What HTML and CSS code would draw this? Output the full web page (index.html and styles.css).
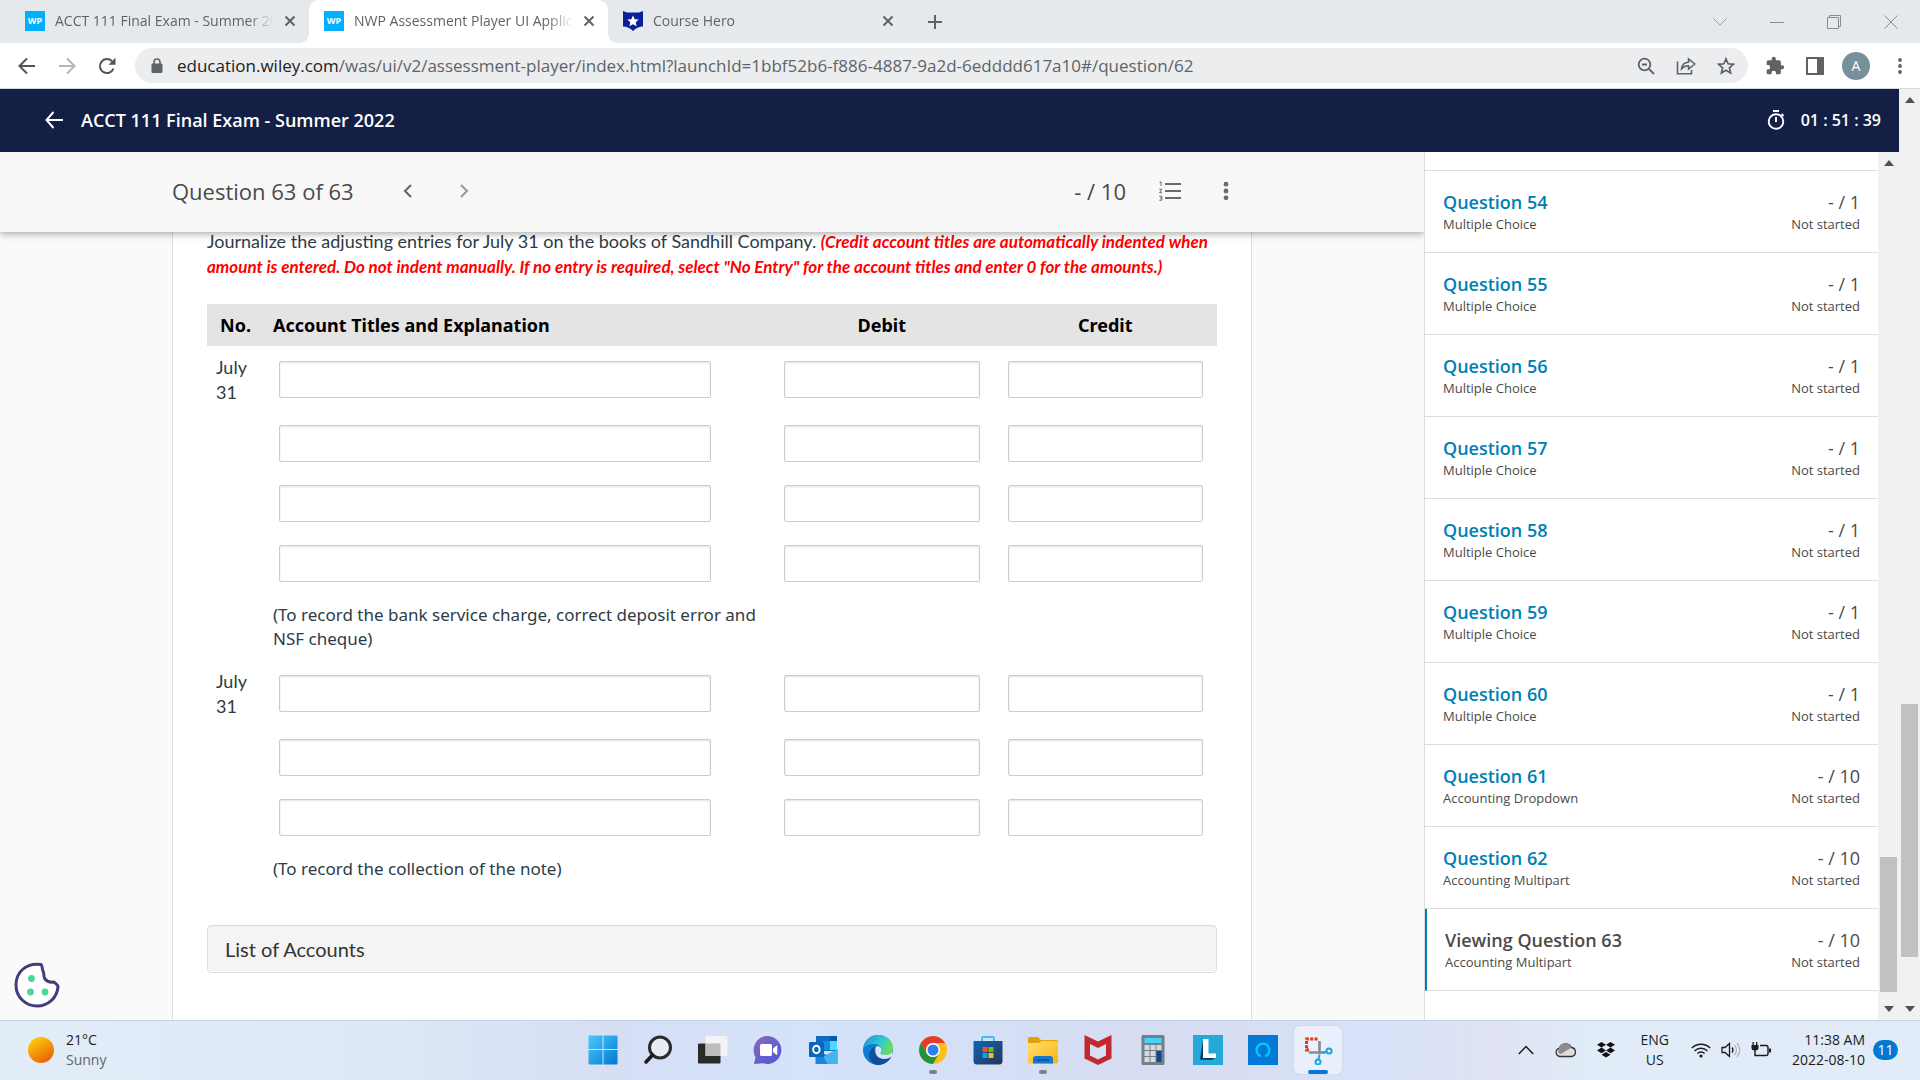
FILE: index.html
```
<!DOCTYPE html>
<html lang="en">
<head>
<meta charset="utf-8">
<title>NWP Assessment Player UI Application</title>
<link rel="stylesheet" href="styles.css">
</head>
<body>
<header class="browser">
  <div class="tabstrip">
    <div class="tab">
      <span class="favicon-wp">WP</span>
      <span class="tab-title">ACCT 111 Final Exam - Summer 2022</span>
      <button class="tab-close" aria-label="Close tab"><svg width="12" height="12" viewBox="0 0 12 12"><path d="M1.500 1.500l9 9M10.500 1.500l-9 9" stroke="#5f6368" stroke-width="2"/></svg></button>
    </div>
    <div class="tab tab-active">
      <span class="favicon-wp">WP</span>
      <span class="tab-title">NWP Assessment Player UI Application</span>
      <button class="tab-close" aria-label="Close tab"><svg width="12" height="12" viewBox="0 0 12 12"><path d="M1.500 1.500l9 9M10.500 1.500l-9 9" stroke="#5f6368" stroke-width="2"/></svg></button>
    </div>
    <div class="tab">
      <svg width="20" height="20" viewBox="0 0 20 20"><path d="M0 0l4 1.500h12L20 0v15.500c-4 0-7 1.500-10 4.500-3-3-6-4.500-10-4.500z" fill="#0a1f9c"/><path d="M10 4.500l1.700 3.700 4 .4-3 2.700.9 4-3.600-2.100-3.600 2.100.9-4-3-2.700 4-.4z" fill="#fff"/></svg>
      <span class="tab-title">Course Hero</span>
      <button class="tab-close" aria-label="Close tab"><svg width="12" height="12" viewBox="0 0 12 12"><path d="M1.500 1.500l9 9M10.500 1.500l-9 9" stroke="#5f6368" stroke-width="2"/></svg></button>
    </div>
    <button class="new-tab" aria-label="New tab"><svg width="16" height="16" viewBox="0 0 16 16"><path d="M8 1v14M1 8h14" stroke="#5f6368" stroke-width="2"/></svg></button>
    <div class="window-controls">
      <button aria-label="Search tabs"><svg width="14" height="8" viewBox="0 0 14 8"><path d="M.5.5L7 7.200 13.500.5" fill="none" stroke="#9a9da0"/></svg></button>
      <button aria-label="Minimize"><svg width="14" height="14" viewBox="0 0 14 14"><path d="M0 7.500h14" stroke="#8a8d90"/></svg></button>
      <button aria-label="Restore"><svg width="14" height="14" viewBox="0 0 14 14"><path d="M.5 2.500h11v11H.5zM2.500 2.500v-2h11v11h-2" fill="none" stroke="#8a8d90"/></svg></button>
      <button aria-label="Close window"><svg width="14" height="14" viewBox="0 0 14 14"><path d="M.5.5l13 13M13.500.5l-13 13" stroke="#8a8d90"/></svg></button>
    </div>
  </div>
  <div class="toolbar">
    <button class="nav-btn" aria-label="Back"><svg width="18" height="18" viewBox="0 0 18 18"><path d="M9 1.500L1.500 9 9 16.500M1.500 9H17" fill="none" stroke="#50545a" stroke-width="2"/></svg></button>
    <button class="nav-btn" aria-label="Forward"><svg width="18" height="18" viewBox="0 0 18 18"><path d="M9 1.500L16.500 9 9 16.500M16.500 9H1" fill="none" stroke="#b4b7ba" stroke-width="2"/></svg></button>
    <button class="nav-btn" aria-label="Reload"><svg width="18" height="18" viewBox="0 0 18 18"><path d="M15.500 11.500A7 7 0 1 1 14 4.200" fill="none" stroke="#50545a" stroke-width="2"/><path d="M17.500.8v7h-7z" fill="#50545a"/></svg></button>
    <div class="omnibox">
      <svg width="12" height="16" viewBox="0 0 12 16"><rect x="0.500" y="5.500" width="11" height="9.500" rx="1.200" fill="#5f6368"/><path d="M3 6V4a3 3 0 0 1 6 0v2" fill="none" stroke="#5f6368" stroke-width="1.600"/></svg>
      <p class="url"><span class="url-host">education.wiley.com</span>/was/ui/v2/assessment-player/index.html?launchId=1bbf52b6-f886-4887-9a2d-6edddd617a10#/question/62</p>
      <button class="nav-btn" aria-label="Zoom"><svg width="18" height="18" viewBox="0 0 18 18"><circle cx="7.500" cy="7.500" r="5.800" fill="none" stroke="#5f6368" stroke-width="1.800"/><path d="M5 7.500h5M12 12l5 5" stroke="#5f6368" stroke-width="1.800"/></svg></button>
      <button class="nav-btn" aria-label="Share"><svg width="20" height="18" viewBox="0 0 20 18"><path d="M1.500 4.500v12.200h14V13" fill="none" stroke="#5f6368" stroke-width="1.600"/><path d="M5.500 12c.5-4.500 3-6.500 7-6.700V1.800L18.800 7l-6.300 5.200V8.800C9.500 8.800 7.500 9.700 5.500 12z" fill="none" stroke="#5f6368" stroke-width="1.500"/></svg></button>
      <button class="nav-btn" aria-label="Bookmark"><svg width="18" height="18" viewBox="0 0 18 18"><path d="M9 1.800l2.100 5 5.300.5-4 3.500 1.200 5.300L9 13.300l-4.600 2.800 1.200-5.300-4-3.500 5.300-.5z" fill="none" stroke="#5f6368" stroke-width="1.700"/></svg></button>
    </div>
    <button class="nav-btn" aria-label="Extensions"><svg width="20" height="20" viewBox="0 0 24 24"><path d="M20.500 11H19V7a2 2 0 0 0-2-2h-4V3.500a2.500 2.500 0 0 0-5 0V5H4a2 2 0 0 0-2 2v3.800h1.500a2.700 2.700 0 0 1 0 5.400H2V20a2 2 0 0 0 2 2h3.800v-1.500a2.700 2.700 0 0 1 5.400 0V22H17a2 2 0 0 0 2-2v-4h1.500a2.500 2.500 0 0 0 0-5z" fill="#5f6368"/></svg></button>
    <button class="nav-btn" aria-label="Side panel"><svg width="18" height="18" viewBox="0 0 18 18"><rect x="1" y="1" width="16" height="16" fill="#fff" stroke="#5f6368" stroke-width="2"/><rect x="11" y="1" width="6" height="16" fill="#5f6368"/></svg></button>
    <button class="avatar" aria-label="Profile">A</button>
    <button class="nav-btn" aria-label="Browser menu"><svg width="4" height="18" viewBox="0 0 4 18"><g fill="#5f6368"><circle cx="2" cy="3" r="1.900"/><circle cx="2" cy="9" r="1.900"/><circle cx="2" cy="15" r="1.900"/></g></svg></button>
  </div>
</header>

<div class="page">
  <div class="app">
    <header class="app-header">
      <button class="plain" aria-label="Leave exam"><svg width="18" height="18" viewBox="0 0 18 18"><path d="M8.500 1L1.500 9l7 8M1.500 9H18" fill="none" stroke="#fff" stroke-width="2"/></svg></button>
      <h1 class="exam-title">ACCT 111 Final Exam - Summer 2022</h1>
      <svg class="timer-icon" width="18" height="20" viewBox="0 0 18 20"><circle cx="9" cy="11.500" r="7.300" fill="none" stroke="#fff" stroke-width="1.900"/><path d="M6 1h6M9 7v5M14.500 4l2 2" stroke="#fff" stroke-width="1.900"/></svg>
      <span class="timer">01 : 51 : 39</span>
    </header>
    <div class="columns">
      <main class="main">
        <div class="question-bar">
          <div class="question-bar-inner">
            <h2 class="question-title">Question 63 of 63</h2>
            <button class="step" aria-label="Previous question"><svg width="10" height="14" viewBox="0 0 10 14"><path d="M8 1L2 7l6 6" fill="none" stroke="#666" stroke-width="2"/></svg></button>
            <button class="step" aria-label="Next question"><svg width="10" height="14" viewBox="0 0 10 14"><path d="M2 1l6 6-6 6" fill="none" stroke="#999" stroke-width="2"/></svg></button>
            <span class="question-score">- / 10</span>
            <button class="step" aria-label="Question list"><svg width="22" height="20" viewBox="0 0 22 20"><path d="M6 3h16M6 10h16M6 17h16" stroke="#6a6a6a" stroke-width="2"/><path d="M.5 1.500L2 .8V5M.3 8.200h2.500L.6 11.800h2.500M.3 15.200h2.500v4H.3M1 17.200h1.800" fill="none" stroke="#6a6a6a"/></svg></button>
            <button class="step" aria-label="More options"><svg width="6" height="20" viewBox="0 0 6 20"><g fill="#6a6a6a"><circle cx="3" cy="3.200" r="2.400"/><circle cx="3" cy="10" r="2.400"/><circle cx="3" cy="16.800" r="2.400"/></g></svg></button>
          </div>
        </div>
        <div class="scroll-area">
          <section class="card">
            <p class="prompt">Journalize the adjusting entries for July 31 on the books of Sandhill Company. <em class="hint">(Credit account titles are automatically indented when amount is entered. Do not indent manually. If no entry is required, select "No Entry" for the account titles and enter 0 for the amounts.)</em></p>
            <table class="journal">
              <colgroup><col class="col-no"><col class="col-account"><col class="col-amount"><col class="col-amount"></colgroup>
              <thead>
                <tr><th class="left-no">No.</th><th class="left">Account Titles and Explanation</th><th>Debit</th><th>Credit</th></tr>
              </thead>
              <tbody>
                <tr class="first"><td class="date">July 31</td><td class="account"><input type="text" aria-label="Account title 1"></td><td class="amount"><input type="text" aria-label="Debit 1"></td><td class="amount"><input type="text" aria-label="Credit 1"></td></tr>
                <tr><td></td><td class="account"><input type="text" aria-label="Account title 2"></td><td class="amount"><input type="text" aria-label="Debit 2"></td><td class="amount"><input type="text" aria-label="Credit 2"></td></tr>
                <tr><td></td><td class="account"><input type="text" aria-label="Account title 3"></td><td class="amount"><input type="text" aria-label="Debit 3"></td><td class="amount"><input type="text" aria-label="Credit 3"></td></tr>
                <tr><td></td><td class="account"><input type="text" aria-label="Account title 4"></td><td class="amount"><input type="text" aria-label="Debit 4"></td><td class="amount"><input type="text" aria-label="Credit 4"></td></tr>
                <tr><td></td><td class="note">(To record the bank service charge, correct deposit error and NSF cheque)</td><td></td><td></td></tr>
              </tbody>
              <tbody>
                <tr class="first"><td class="date">July 31</td><td class="account"><input type="text" aria-label="Account title 5"></td><td class="amount"><input type="text" aria-label="Debit 5"></td><td class="amount"><input type="text" aria-label="Credit 5"></td></tr>
                <tr><td></td><td class="account"><input type="text" aria-label="Account title 6"></td><td class="amount"><input type="text" aria-label="Debit 6"></td><td class="amount"><input type="text" aria-label="Credit 6"></td></tr>
                <tr><td></td><td class="account"><input type="text" aria-label="Account title 7"></td><td class="amount"><input type="text" aria-label="Debit 7"></td><td class="amount"><input type="text" aria-label="Credit 7"></td></tr>
                <tr><td></td><td class="note">(To record the collection of the note)</td><td></td><td></td></tr>
              </tbody>
            </table>
            <button class="accounts">List of Accounts</button>
          </section>
        </div>
      </main>
      <nav class="sidebar" aria-label="Questions">
        <div class="row-tail"></div>
        <a class="row" href="#q54"><span class="row-title">Question 54</span><span class="row-score">- / 1</span><span>Multiple Choice</span><span>Not started</span></a>
        <a class="row" href="#q55"><span class="row-title">Question 55</span><span class="row-score">- / 1</span><span>Multiple Choice</span><span>Not started</span></a>
        <a class="row" href="#q56"><span class="row-title">Question 56</span><span class="row-score">- / 1</span><span>Multiple Choice</span><span>Not started</span></a>
        <a class="row" href="#q57"><span class="row-title">Question 57</span><span class="row-score">- / 1</span><span>Multiple Choice</span><span>Not started</span></a>
        <a class="row" href="#q58"><span class="row-title">Question 58</span><span class="row-score">- / 1</span><span>Multiple Choice</span><span>Not started</span></a>
        <a class="row" href="#q59"><span class="row-title">Question 59</span><span class="row-score">- / 1</span><span>Multiple Choice</span><span>Not started</span></a>
        <a class="row" href="#q60"><span class="row-title">Question 60</span><span class="row-score">- / 1</span><span>Multiple Choice</span><span>Not started</span></a>
        <a class="row" href="#q61"><span class="row-title">Question 61</span><span class="row-score">- / 10</span><span>Accounting Dropdown</span><span>Not started</span></a>
        <a class="row" href="#q62"><span class="row-title">Question 62</span><span class="row-score">- / 10</span><span>Accounting Multipart</span><span>Not started</span></a>
        <a class="row row-current" href="#q63"><span class="row-title">Viewing Question 63</span><span class="row-score">- / 10</span><span>Accounting Multipart</span><span>Not started</span></a>
      </nav>
      <div class="scrollbar sidebar-bar" aria-hidden="true">
        <svg width="10" height="6" viewBox="0 0 10 6"><path d="M0 6l5-6 5 6z" fill="#505050"/></svg>
        <div class="thumb"></div>
        <svg class="arrow-down" width="10" height="6" viewBox="0 0 10 6"><path d="M0 0l5 6 5-6z" fill="#505050"/></svg>
      </div>
    </div>
  </div>
  <div class="scrollbar page-bar" aria-hidden="true">
    <svg width="10" height="6" viewBox="0 0 10 6"><path d="M0 6l5-6 5 6z" fill="#505050"/></svg>
    <div class="thumb"></div>
    <svg class="arrow-down" width="10" height="6" viewBox="0 0 10 6"><path d="M0 0l5 6 5-6z" fill="#505050"/></svg>
  </div>
  <button class="cookie" aria-label="Cookie settings"><svg width="46" height="46" viewBox="0 0 46 46"><path d="M27 2.500C11 .5 2 11 2 23c0 12 9.500 21 21 21 11 0 20-8 21-19 .2-2-2.500-3.500-4-5-3 .5-7-.5-9-3-1.500-2-1-5-1.500-7-2-2-.5-6-2.500-7.500z" fill="#fff" stroke="#423e7d" stroke-width="3" stroke-linejoin="round"/><g fill="#4bd69a"><circle cx="17.500" cy="16.500" r="3.400"/><circle cx="16.500" cy="30" r="3.400"/><circle cx="31" cy="30" r="3.400"/></g></svg></button>
</div>

<footer class="taskbar">
  <button class="weather">
    <svg width="26" height="26" viewBox="0 0 26 26"><defs><linearGradient id="sun" x1="0.200" y1="0" x2="0.800" y2="1"><stop offset="0" stop-color="#ffcf0d"/><stop offset="1" stop-color="#e85a06"/></linearGradient></defs><circle cx="13" cy="13" r="13" fill="url(#sun)"/></svg>
    <span class="weather-text"><span>21°C</span><span class="muted">Sunny</span></span>
  </button>
  <div class="apps">
    <button class="app-btn" aria-label="Start"><svg width="30" height="30" viewBox="0 0 30 30"><defs><linearGradient id="win" x1="0" y1="0" x2="1" y2="1"><stop offset="0" stop-color="#4cc9f8"/><stop offset="1" stop-color="#0078d4"/></linearGradient></defs><path d="M1.500.5h13v13.500h-14V1.500q0-1 1-1zM15.500.5h13q1 0 1 1V14h-14zM.5 15h14v14.500h-13q-1 0-1-1zM15.500 15h14v13.500q0 1-1 1h-13z" fill="url(#win)"/></svg></button>
    <button class="app-btn" aria-label="Search"><svg width="30" height="30" viewBox="0 0 30 30"><circle cx="17" cy="12.500" r="10.500" fill="#e8ebf4" stroke="#2b2b2b" stroke-width="3"/><path d="M9.500 20L3 27" stroke="#1c1c1c" stroke-width="3.600" stroke-linecap="round"/></svg></button>
    <button class="app-btn" aria-label="Task view"><svg width="30" height="30" viewBox="0 0 30 30"><rect x="0" y="8.500" width="22.500" height="20" rx="1" fill="#2a2a29"/><rect x="7.500" y="1" width="22" height="20" rx="1" fill="#f4f4f5" opacity=".96"/><path d="M7.500 8.500h15V21h-15z" fill="#bdbdbd"/></svg></button>
    <button class="app-btn" aria-label="Chat"><svg width="30" height="30" viewBox="0 0 30 30"><defs><linearGradient id="chat" x1="0" y1="0" x2="0.800" y2="1"><stop offset="0" stop-color="#8b69b8"/><stop offset="1" stop-color="#5059d4"/></linearGradient></defs><path d="M15 1a14 14 0 1 1-5 27.300L1 29l1.500-7A14 14 0 0 1 15 1z" fill="url(#chat)"/><rect x="7" y="9" width="12" height="12" rx="1.500" fill="#fff"/><path d="M20 13.500l3.500-3q.8 0 .8 1v7.500q0 1-.8 1l-3.500-3z" fill="#fff"/></svg></button>
    <button class="app-btn" aria-label="Outlook"><svg width="30" height="30" viewBox="0 0 30 30"><path d="M8 1h21v15H8z" fill="#0f6cbd"/><path d="M15 6h7v9h-7z" fill="#1490df"/><path d="M22 6h7v9h-7z" fill="#50d9ff"/><path d="M22 1h7v5h-7z" fill="#0a5aa8"/><path d="M7.500 14l11 6 11-6v15h-22z" fill="#1a86dc"/><path d="M29.500 14v15h-10l-4-7z" fill="#45b3ee"/><rect x="1" y="7" width="15" height="15" rx="1" fill="#0b65bd"/><ellipse cx="8.400" cy="14.500" rx="3.200" ry="3.700" fill="none" stroke="#fff" stroke-width="2"/></svg></button>
    <button class="app-btn" aria-label="Edge"><svg width="30" height="30" viewBox="0 0 30 30"><defs><linearGradient id="edge" x1="0" y1="0.200" x2="1" y2="0.600"><stop offset="0" stop-color="#1d9bdc"/><stop offset=".55" stop-color="#2fc8d2"/><stop offset="1" stop-color="#6be34b"/></linearGradient></defs><circle cx="15" cy="15" r="15" fill="#0c7dd0"/><path d="M.5 13C2 5 8 0 15.500 0 24 0 30 6 30 12.500c0 5-4 7.500-8 7.500-3 0-4.500-1-4.500-2 0-1 1-1.200 1-3.500 0-3-3.500-5.500-7.500-5.500C6 9 2.500 11 .5 13z" fill="url(#edge)"/><path d="M28 22c-3 6-9 8-13 8C9 30 5.500 24 6 19.500 6.500 16 9 13 12 11c-2 4 0 13 9 13 3 0 5-.8 7-2z" fill="#0f4e9b"/><path d="M13 11.500c3-1 5.500.5 5.500 3 0 2-1 2.500-1 3.500 0 1 1.500 2 4.500 2 3.500 0 6.500-1.500 7.500-4 .5 2 0 4.500-1.500 6-4.500 3-12 2.500-14.500-2-1.500-3-1.500-6-.5-8.500z" fill="#dde3f6"/></svg></button>
    <button class="app-btn" aria-label="Chrome"><svg width="28" height="28" viewBox="0 0 28 28"><circle cx="14" cy="14" r="14" fill="#fbc116"/><path d="M1.900 7A14 14 0 0 1 26.100 7H14a7 7 0 0 0-6.100 10.500z" fill="#e33b2e"/><path d="M1.900 7l6 10.500A7 7 0 0 0 20.100 17.500L14 28A14 14 0 0 1 1.900 7z" fill="#229342"/><circle cx="14" cy="14" r="7" fill="#fff"/><circle cx="14" cy="14" r="5.500" fill="#2f7df0"/></svg><i class="running"></i></button>
    <button class="app-btn" aria-label="Microsoft Store"><svg width="30" height="30" viewBox="0 0 30 30"><defs><linearGradient id="store" x1="0" y1="0" x2="1" y2="1"><stop offset="0" stop-color="#0c67b4"/><stop offset="1" stop-color="#27345c"/></linearGradient></defs><path d="M9 7V3.500Q9 2 10.500 2h9Q21 2 21 3.500V7" fill="none" stroke="#35c3f5" stroke-width="2"/><path d="M.5 6h29v20q0 3.500-3.500 3.500H4Q.5 29.500.5 26z" fill="url(#store)"/><path d="M9.500 12h5v5h-5z" fill="#f25022"/><path d="M15.500 12h5v5h-5z" fill="#7fba00"/><path d="M9.500 18h5v5h-5z" fill="#00a4ef"/><path d="M15.500 18h5v5h-5z" fill="#ffb900"/></svg></button>
    <button class="app-btn" aria-label="File Explorer"><svg width="30" height="30" viewBox="0 0 30 30"><defs><linearGradient id="folder" x1="0" y1="0" x2="1" y2="1"><stop offset="0" stop-color="#ffe078"/><stop offset="1" stop-color="#f9b40c"/></linearGradient></defs><path d="M0 3.500Q0 2 1.500 2H10l3 3h15.500Q30 5 30 6.500V12H0z" fill="#e3a008"/><path d="M0 8h11l3-2h14.500Q30 6 30 7.500V27q0 1.500-1.500 1.500h-27Q0 28.500 0 27z" fill="url(#folder)"/><path d="M5 28.500V24q0-3 3-3h14q3 0 3 3v4.500z" fill="#1377cf"/><path d="M9 25h12" stroke="#0a4f93" stroke-width="1.500"/></svg><i class="running"></i></button>
    <button class="app-btn" aria-label="McAfee"><svg width="28" height="30" viewBox="0 0 28 30"><path d="M.5 0L14 6.500 27.500 0v23.500L14 30 .5 23.500z" fill="#c3272f"/><path d="M6 9l8 4 8-4v11.500l-8 4-8-4z" fill="#d8dff3"/></svg></button>
    <button class="app-btn" aria-label="Calculator"><svg width="24" height="30" viewBox="0 0 24 30"><rect x=".5" width="23" height="30" rx="1.500" fill="#757e89"/><path d="M3.500 3h17v5h-17z" fill="#41d6f8"/><g fill="#d5dae0"><path d="M3.500 10h5v5h-5zM9.500 10h5v5h-5zM15.500 10h5v5h-5zM3.500 16h5v5h-5zM9.500 16h5v5h-5zM3.500 22h5v5h-5zM9.500 22h5v5h-5z"/></g><path d="M15.500 16h5v11h-5z" fill="#0f478c"/></svg></button>
    <button class="app-btn" aria-label="Lockdown Browser"><svg width="30" height="30" viewBox="0 0 30 30"><path d="M0 0h30v30H0z" fill="#25aad8"/><path d="M10 5L7 24.500l12 .5 3-2-12-1z" fill="#0a3a66"/><path d="M10 4h5.500v14.500H23V23H10z" fill="#fff"/></svg></button>
    <button class="app-btn" aria-label="Alexa"><svg width="30" height="30" viewBox="0 0 30 30"><path d="M0 0h30v30H0z" fill="#0278d7"/><path d="M13 21.300a6.500 6.500 0 1 1 4 0" fill="none" stroke="#00cbff" stroke-width="2.200"/></svg></button>
    <button class="app-btn app-btn-active" aria-label="Snipping Tool"><svg width="30" height="30" viewBox="0 0 30 30"><path d="M14.500 4H3.500v11H7" fill="none" stroke="#d93b0b" stroke-width="3" stroke-dasharray="3 1.300"/><path d="M16.500 6v13M6 17.500h16" stroke="#848b93" stroke-width="2.600"/><g fill="none" stroke="#1fa2e2" stroke-width="2"><circle cx="26" cy="16" r="2.600"/><circle cx="15" cy="27" r="2.500"/><path d="M15.500 24.500l1-5M23.500 17l-4 .5"/></g></svg><i class="running running-wide"></i></button>
  </div>
  <div class="tray">
    <button class="plain" aria-label="Hidden icons"><svg width="16" height="10" viewBox="0 0 16 10"><path d="M.8 9L8 1.500 15.200 9" fill="none" stroke="#1c1c1c" stroke-width="1.500"/></svg></button>
    <button class="plain" aria-label="OneDrive"><svg width="22" height="16" viewBox="0 0 22 16"><path d="M5 14.500a4.200 4.200 0 0 1-.5-8.300A6.500 6.500 0 0 1 16.500 5.500a4.600 4.600 0 0 1 .5 9z" fill="#dedede" stroke="#333" stroke-width="1.300"/><path d="M4 6.500A6.500 6.500 0 0 1 16.500 5.500L6 12C4 12 2 9 4 6.500z" fill="#8c8c8c"/></svg></button>
    <button class="plain" aria-label="Dropbox"><svg width="18" height="16" viewBox="0 0 18 16"><path d="M4.500 0L9 2.800 4.500 5.600 0 2.800zM13.500 0L18 2.800l-4.500 2.800L9 2.800zM4.500 5.600L9 8.400l-4.500 2.800L0 8.400zM13.500 5.600L18 8.400l-4.500 2.800L9 8.400zM9 10l4.500 2.800L9 15.600l-4.500-2.800z" fill="#111"/></svg></button>
    <button class="lang"><span>ENG</span><span>US</span></button>
    <button class="system" aria-label="Network, volume, battery">
      <svg width="20" height="16" viewBox="0 0 20 16"><g fill="none" stroke="#1c1c1c" stroke-width="1.400"><path d="M.8 6a13 13 0 0 1 18.400 0M3.600 8.900a9 9 0 0 1 12.800 0M6.400 11.600a5 5 0 0 1 7.200 0"/></g><circle cx="10" cy="14" r="1.600" fill="#1c1c1c"/></svg>
      <svg width="20" height="16" viewBox="0 0 20 16"><path d="M1 5.500h3l4.500-4v13l-4.500-4H1z" fill="none" stroke="#1c1c1c" stroke-width="1.300"/><path d="M11 5.500q2 2.500 0 5" fill="none" stroke="#1c1c1c" stroke-width="1.300"/><path d="M13.500 3q4 5 0 10M16 1q5.500 7 0 14" fill="none" stroke="#a9b0b8" stroke-width="1.200"/></svg>
      <svg width="20" height="16" viewBox="0 0 20 16"><path d="M9 3.500h6q2 0 2 2v6q0 2-2 2H4V8" fill="none" stroke="#1c1c1c" stroke-width="1.400"/><path d="M18 6.500h2v4h-2zM.5 3h7v3q0 2.500-3.500 2.500T.5 6zM1.500 0h1.300v3H1.500zM5 0h1.300v3H5z" fill="#1c1c1c"/></svg>
    </button>
    <button class="clock"><span>11:38 AM</span><span>2022-08-10</span></button>
    <span class="badge">11</span>
  </div>
</footer>
</body>
</html>
```
FILE: styles.css
```
* { box-sizing: border-box; }

body {
  margin: 0;
  height: 100vh;
  display: flex;
  flex-direction: column;
  overflow: hidden;
  font-family: "Open Sans", "Noto Sans", sans-serif;
  color: #4a4a4a;
}

button {
  border: 0;
  padding: 0;
  background: none;
  font: inherit;
  color: inherit;
}

svg { display: block; flex: none; }

/* Browser frame */
.tabstrip {
  display: flex;
  align-items: center;
  height: 43px;
  padding-left: 10px;
  background: #e6e9ec;
}

.tab {
  position: relative;
  display: flex;
  align-items: center;
  gap: 10px;
  width: 299px;
  height: 43px;
  padding: 0 13px 2px 15px;
  color: #5f6368;
  font-size: 14px;
}

.tab-active {
  background: #fff;
  border-radius: 10px 10px 0 0;
}

.tab-active::before,
.tab-active::after {
  content: "";
  position: absolute;
  bottom: 0;
  width: 10px;
  height: 10px;
}

.tab-active::before {
  left: -10px;
  background: radial-gradient(circle at 0 0, transparent 10px, #fff 10px);
}

.tab-active::after {
  right: -10px;
  background: radial-gradient(circle at 100% 0, transparent 10px, #fff 10px);
}

.favicon-wp {
  width: 20px;
  height: 20px;
  background: #00b0ff;
  color: #fff;
  font-size: 9px;
  font-weight: 700;
  line-height: 20px;
  text-align: center;
}

.tab-title {
  flex: 1;
  overflow: hidden;
  white-space: nowrap;
  mask-image: linear-gradient(to right, #000 88%, transparent);
}

.new-tab { margin-left: 20px; }

.window-controls {
  display: flex;
  margin-left: auto;
  margin-right: 1px;
  height: 40px;
}

.window-controls button {
  width: 57px;
  display: grid;
  place-items: center;
}

.toolbar {
  display: flex;
  align-items: center;
  height: 46px;
  padding: 0 18px 0 17px;
  border-bottom: 1px solid #d5d8da;
  background: #fff;
}

.nav-btn {
  display: grid;
  place-items: center;
  min-width: 20px;
  margin-right: 20px;
}

.toolbar > .nav-btn:last-child { margin-right: 0; }

.omnibox {
  flex: 1;
  display: flex;
  align-items: center;
  height: 35px;
  margin: 0 17px 0 -2px;
  padding: 0 12px 0 16px;
  border-radius: 18px;
  background: #ebedee;
}

.omnibox .nav-btn:last-child { margin-right: 0; }

.url {
  flex: 1;
  margin: 0 0 0 14px;
  overflow: hidden;
  white-space: nowrap;
  font-size: 17px;
  line-height: 24px;
  color: #5f6368;
}

.url-host { color: #202124; }

.avatar {
  width: 28px;
  height: 28px;
  margin: 0 28px 0 7px;
  border-radius: 50%;
  background: #78909c;
  color: #fff;
  font-size: 14px;
}

.toolbar > .nav-btn:nth-last-child(3) { margin-right: 10px; }
.toolbar > .nav-btn:last-child { min-width: 4px; }

/* Page */
.page {
  position: relative;
  flex: 1;
  min-height: 0;
  display: flex;
}

.app {
  flex: 1;
  min-width: 0;
  display: flex;
  flex-direction: column;
}

.app-header {
  display: flex;
  align-items: center;
  height: 63px;
  padding: 0 18px 1px 45px;
  background: #131f45;
  color: #fff;
}

.exam-title {
  flex: 1;
  margin: 0 0 0 18px;
  font-size: 18px;
  font-weight: 600;
}

.timer {
  margin-left: 16px;
  font-size: 16px;
  font-weight: 600;
}

.columns {
  flex: 1;
  min-height: 0;
  display: flex;
}

.main {
  flex: 1;
  min-width: 0;
  display: flex;
  flex-direction: column;
  overflow: hidden;
}

.question-bar {
  position: relative;
  z-index: 1;
  background: #f8f8f8;
  box-shadow: 0 1px 8px rgba(0, 0, 0, 0.4);
}

.question-bar-inner {
  display: flex;
  align-items: center;
  height: 80px;
  max-width: 1080px;
  margin: 0 auto;
  padding: 0 10px 2px 0;
}

.question-title {
  margin: 0 38px 0 0;
  font-size: 22px;
  font-weight: 400;
}

.step {
  display: grid;
  place-items: center;
  width: 32px;
  height: 32px;
}

.step + .step { margin-left: 24px; }

.question-score {
  margin: 0 28px 0 auto;
  font-size: 22px;
}

.scroll-area {
  flex: 1;
  min-height: 0;
  display: flex;
  justify-content: center;
  background: #fafafa;
}

.card {
  width: 100%;
  max-width: 1080px;
  padding: 0 34px;
  border: 1px solid #dcdcdc;
  border-width: 0 1px;
  background: #fff;
}

.prompt {
  margin: -3px 0 25px;
  font-family: Lato, sans-serif;
  font-size: 18px;
  line-height: 25px;
  color: #2d3b45;
}

.hint {
  font-size: 17px;
  font-weight: 700;
  color: #f00;
}

.journal {
  width: 100%;
  table-layout: fixed;
  border-collapse: collapse;
}

.col-no { width: 58px; }
.col-account { width: 50%; }

.journal th {
  height: 42px;
  padding: 0;
  background: #e4e4e4;
  font: 700 18px/24px "Noto Sans", sans-serif;
  color: #000;
  text-align: center;
}

.journal .left-no { padding-left: 13px; text-align: left; }
.journal .left { padding-left: 8px; text-align: left; }

.journal td {
  height: 60px;
  padding: 0;
  vertical-align: top;
  color: #2d3b45;
}

.journal .first td { height: 64px; }

.journal .date {
  padding: 9px 9px 0;
  font: 18px/25px Lato, sans-serif;
}

.journal .account { padding: 15px 59px 0 14px; }
.journal .amount { padding: 15px 14px 0; }

.journal .note {
  height: auto;
  padding: 13px 8px 9px;
  font: 17px/24px "Noto Sans", sans-serif;
}

.journal input {
  display: block;
  width: 100%;
  height: 37px;
  padding: 0 8px;
  border: 1px solid #c7cdd1;
  border-radius: 2px;
  box-shadow: inset 0 1px 2px rgba(0, 0, 0, 0.12);
  font: inherit;
}

.accounts {
  display: block;
  width: 100%;
  height: 48px;
  margin-top: 21px;
  padding: 0 17px;
  border: 1px solid #dcdcdc;
  border-radius: 4px;
  box-shadow: inset 0 -1px 0 #fff;
  background: #f4f4f4;
  font: 20px/24px Lato, sans-serif;
  color: #333;
  text-align: left;
}

/* Question list */
.sidebar {
  width: 454px;
  overflow: hidden;
  border-left: 1px solid #dcdcdc;
  background: #fff;
}

.row-tail {
  height: 19px;
  border-bottom: 1px solid #dcdcdc;
}

.row {
  display: grid;
  grid-template-columns: 1fr auto;
  grid-template-rows: 24px 20px;
  align-items: center;
  padding: 19px 18px 18px;
  border-bottom: 1px solid #dcdcdc;
  color: #4a4a4a;
  font-size: 13px;
  text-decoration: none;
}

.row span:nth-child(even) { text-align: right; }

.row-title {
  color: #007fb5;
  font-size: 18px;
  font-weight: 600;
}

.row-score { font-size: 18px; }

.row-current { border-left: 2px solid #007fb5; }
.row-current .row-title { color: #4a4a4a; }

/* Scrollbars */
.scrollbar {
  display: grid;
  justify-items: center;
  align-items: center;
  width: 21px;
  background: #f1f1f1;
}

.sidebar-bar { grid-template-rows: 22px 683fr 135fr 28px; }
.page-bar { grid-template-rows: 22px 593fr 253fr 63px; }

.thumb {
  grid-row: 3;
  width: 17px;
  height: 100%;
  background: #c1c1c1;
}

.arrow-down {
  grid-row: 4;
  align-self: end;
  margin-bottom: 8px;
}

.cookie {
  position: absolute;
  left: 14px;
  bottom: 12px;
}

/* Taskbar */
.taskbar {
  display: grid;
  grid-template-columns: 1fr auto 1fr;
  align-items: center;
  height: 60px;
  padding-bottom: 1px;
  border-top: 1px solid #c5d2e6;
  background: linear-gradient(to right, #e2edf8 0, #dfe9f6 18%, #d6def4 32%, #d4e3fa 42%, #d6dcf1 60%, #d9e2f8 72%, #dfe3f2 78%, #e1ecf8 83%);
  color: #1c1c1c;
  font-size: 14px;
  line-height: 20px;
}

.weather {
  display: flex;
  align-items: center;
  justify-self: start;
  gap: 12px;
  margin-left: 28px;
  text-align: left;
}

.weather-text,
.lang,
.clock {
  display: flex;
  flex-direction: column;
}

.muted { color: #5c6670; }

.apps {
  display: flex;
  gap: 7px;
}

.app-btn {
  position: relative;
  display: grid;
  place-items: center;
  width: 48px;
  height: 48px;
  border-radius: 5px;
}

.app-btn-active {
  background: #eaf0fb;
  box-shadow: 0 0 1px #9aa6bb;
}

.running {
  position: absolute;
  left: 20px;
  bottom: 0;
  width: 8px;
  height: 4px;
  border-radius: 2px;
  background: #7b818d;
}

.running-wide {
  left: 14px;
  width: 20px;
  background: #0078d4;
}

.tray {
  display: flex;
  align-items: center;
  justify-self: end;
  margin-right: 22px;
}

.tray .plain { width: 40px; display: grid; place-items: center; }

.lang {
  align-items: center;
  margin: 0 22px 0 14px;
}

.system {
  display: flex;
  gap: 10px;
}

.clock {
  align-items: flex-end;
  margin: 0 8px 0 21px;
}

.badge {
  width: 25px;
  height: 20px;
  border-radius: 10px;
  background: #0078d4;
  color: #fff;
  font-size: 14px;
  text-align: center;
}
```
